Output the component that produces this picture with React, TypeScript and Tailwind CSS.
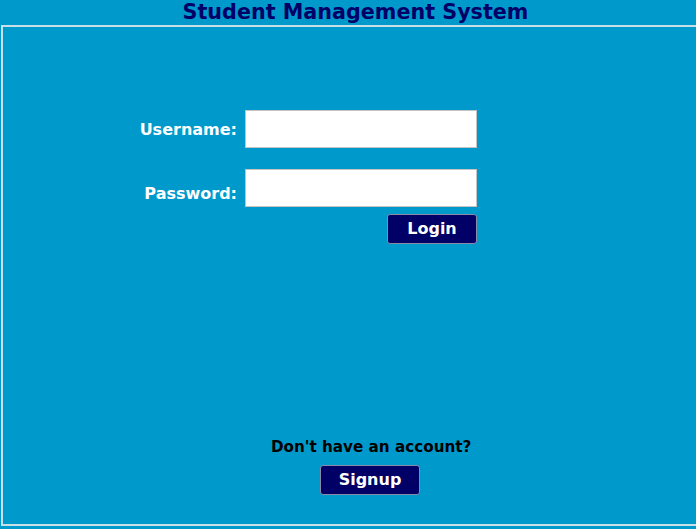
import React from "react";

const font = { fontFamily: "Verdana, 'DejaVu Sans', sans-serif" };

const App = () => {
  return (
    <div className="h-[529px] w-[696px] overflow-hidden bg-[#0099cc]" style={font}>
      <div className="w-[711px]">
        <h1 className="h-[25px] text-center text-[20.7px] font-bold leading-[25px] text-[#000066]">
          Student Management System
        </h1>
        <div className="ml-[1px] h-[501px] w-[710px] border-t-2 border-b-2 border-l-2 border-[#c9dfe8] pt-[83px]">
          <div className="flex items-center">
            <label className="w-[242px] pr-[8px] pt-[1px] text-right text-[16px] font-bold text-white">Username:</label>
            <input className="h-[38px] w-[232px] border border-[#c4c4c4] bg-white" />
          </div>
          <div className="mt-[21px] flex items-center">
            <label className="w-[242px] pr-[8px] pt-[11px] text-right text-[16px] font-bold text-white">Password:</label>
            <input className="h-[38px] w-[232px] border border-[#c4c4c4] bg-white" />
          </div>
          <div className="mt-[7px] flex">
            <button className="ml-[384px] h-[30px] w-[90px] rounded-[3px] border border-[#8a8aa8] bg-[#000066] text-[16px] font-bold text-white">
              Login
            </button>
          </div>
          <p className="mt-[192px] ml-[268px] text-[15.2px] font-bold text-black">Don't have an account?</p>
          <button className="ml-[317px] mt-[6px] h-[30px] w-[100px] rounded-[3px] border border-[#8a8aa8] bg-[#000066] text-[16px] font-bold text-white">
            Signup
          </button>
        </div>
      </div>
    </div>
  );
};

export default App;
